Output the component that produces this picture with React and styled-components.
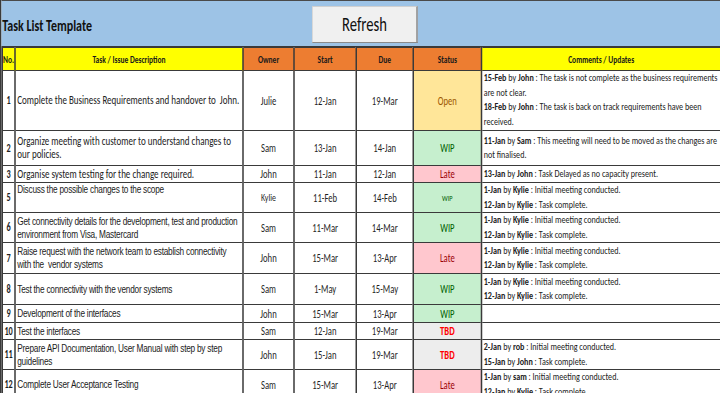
import React from 'react';
import styled, { createGlobalStyle } from 'styled-components';

// The sheet is laid out at 960px and squeezed to the 720px window,
// the way the spreadsheet capture is squeezed horizontally.
const GlobalStyle = createGlobalStyle`
  html, body {
    margin: 0;
    padding: 0;
    background: #ffffff;
  }
  body {
    font-family: Carlito, 'DejaVu Sans Condensed', 'Liberation Sans', sans-serif;
    color: #1f1f1f;
  }
`;

const Viewport = styled.div`
  width: 720px;
  height: 393px;
  overflow: hidden;
`;

const Page = styled.div`
  width: 960px;
  height: 393px;
  box-sizing: border-box;
  border-left: 2px solid #3a3a3a;
  transform: scaleX(0.75);
  transform-origin: 0 0;
`;

const TopBar = styled.div`
  display: grid;
  grid-template-columns: 414px 141px 1fr;
  align-items: center;
  height: 45px;
  background: #9dc3e6;
  border-top: 1px solid #4a4a4a;
  border-bottom: 1px solid #3a3a3a;
`;

const Title = styled.h1`
  margin: 0;
  padding: 3px 0 0 1px;
  font-size: 16px;
  font-weight: bold;
  color: #111;
`;

const RefreshButton = styled.button`
  height: 37px;
  margin-top: 1px;
  background: #f0f0f0;
  border: 1px solid #d0d0d0;
  border-right: 2px solid #8a8a8a;
  border-bottom-color: #8a8a8a;
  font-family: inherit;
  font-size: 19.5px;
  color: #111;
  padding: 0;
`;

const Sheet = styled.table`
  width: 958px;
  table-layout: fixed;
  border-collapse: collapse;
`;

const HeadCell = styled.th`
  height: 22px;
  padding: 0;
  background: ${p => (p.$tone === 'orange' ? '#ed7d31' : '#ffff00')};
  border: 1px solid #3a3a3a;
  border-left-width: 2px;
  border-right-width: 2px;
  font-size: 10px;
  font-weight: bold;
  color: #1a1a1a;
  text-align: ${p => (p.$left ? 'left' : 'center')};
  vertical-align: middle;
`;

const Row = styled.tr`
  height: ${p => p.$h}px;
`;

const Cell = styled.td`
  padding: 0 2px;
  border: 1px solid #3a3a3a;
  border-left-width: 2px;
  border-right-width: 2px;
  vertical-align: ${p => p.$valign || 'middle'};
  overflow: hidden;
`;

const NumCell = styled(Cell)`
  padding: 0;
  text-align: center;
  font-size: 11px;
  font-weight: bold;
`;

const DescCell = styled(Cell)`
  font-family: ${p => (p.$arial ? "'Liberation Sans', Arial, sans-serif" : 'inherit')};
  font-size: ${p => (p.$arial ? '11px' : '12px')};
  letter-spacing: ${p => (p.$arial ? '-0.3px' : '0')};
  line-height: 13px;
  color: #222;
`;

const MidCell = styled(Cell)`
  text-align: center;
  font-size: ${p => (p.$small ? '10.5px' : '11.5px')};
`;

const statusTones = {
  Open: { bg: '#ffe699', fg: '#9c5700', weight: 'normal' },
  WIP: { bg: '#c6efce', fg: '#006100', weight: 'normal' },
  Late: { bg: '#ffc7ce', fg: '#9c0006', weight: 'normal' },
  TBD: { bg: '#ededed', fg: '#ff0000', weight: 'bold' }
};

const StatusCell = styled(Cell)`
  text-align: center;
  background: ${p => statusTones[p.$status].bg};
  color: ${p => statusTones[p.$status].fg};
  font-weight: ${p => statusTones[p.$status].weight};
  font-size: ${p => (p.$small ? '8.5px' : '11.5px')};
`;

const CommentCell = styled(Cell)`
  font-size: 10.8px;
  line-height: 14.5px;
  color: #222;
`;

const Note = styled.div`
  white-space: normal;
`;

const rows = [
  {
    no: 1,
    desc: 'Complete the Business Requirements and handover to\u00a0 John.',
    owner: 'Julie',
    start: '12-Jan',
    due: '19-Mar',
    status: 'Open',
    h: 60,
    noteAlign: 'top',
    notes: [
      ['15-Feb', 'John', 'The task is not complete as the business requirements are not clear.'],
      ['18-Feb', 'John', 'The task is back on track requirements have been received.']
    ]
  },
  {
    no: 2,
    desc: 'Organize meeting with customer to understand changes to our policies.',
    owner: 'Sam',
    start: '13-Jan',
    due: '14-Jan',
    status: 'WIP',
    h: 35,
    notes: [['11-Jan', 'Sam', 'This meeting will need to be moved as the changes are not finalised.']]
  },
  {
    no: 3,
    desc: 'Organise system testing for the change required.',
    owner: 'John',
    start: '11-Jan',
    due: '12-Jan',
    status: 'Late',
    h: 17,
    notes: [['13-Jan', 'John', 'Task Delayed as no capacity present.']]
  },
  {
    no: 5,
    desc: 'Discuss the possible changes to the scope',
    owner: 'Kylie',
    start: '11-Feb',
    due: '14-Feb',
    status: 'WIP',
    small: true,
    arial: true,
    valign: 'top',
    h: 30,
    notes: [
      ['1-Jan', 'Kylie', 'Initial meeting conducted.'],
      ['12-Jan', 'Kylie', 'Task complete.']
    ]
  },
  {
    no: 6,
    desc: 'Get connectivity details for the development, test and production environment from Visa, Mastercard',
    owner: 'Sam',
    start: '11-Mar',
    due: '14-Mar',
    status: 'WIP',
    arial: true,
    h: 30,
    notes: [
      ['1-Jan', 'Kylie', 'Initial meeting conducted.'],
      ['12-Jan', 'Kylie', 'Task complete.']
    ]
  },
  {
    no: 7,
    desc: 'Raise request with the network team to establish connectivity with the\u00a0 vendor systems',
    owner: 'John',
    start: '15-Mar',
    due: '13-Apr',
    status: 'Late',
    arial: true,
    h: 31,
    notes: [
      ['1-Jan', 'Kylie', 'Initial meeting conducted.'],
      ['12-Jan', 'Kylie', 'Task complete.']
    ]
  },
  {
    no: 8,
    desc: 'Test the connectivity with the vendor systems',
    owner: 'Sam',
    start: '1-May',
    due: '15-May',
    status: 'WIP',
    arial: true,
    h: 31,
    notes: [
      ['1-Jan', 'Kylie', 'Initial meeting conducted.'],
      ['12-Jan', 'Kylie', 'Task complete.']
    ]
  },
  {
    no: 9,
    desc: 'Development of the interfaces',
    owner: 'John',
    start: '15-Mar',
    due: '13-Apr',
    status: 'WIP',
    arial: true,
    h: 18,
    notes: []
  },
  {
    no: 10,
    desc: 'Test the interfaces',
    owner: 'Sam',
    start: '12-Jan',
    due: '19-Mar',
    status: 'TBD',
    arial: true,
    h: 17,
    notes: []
  },
  {
    no: 11,
    desc: 'Prepare API Documentation, User Manual with step by step guidelines',
    owner: 'John',
    start: '15-Jan',
    due: '19-Mar',
    status: 'TBD',
    arial: true,
    h: 30,
    notes: [
      ['2-Jan', 'rob', 'Initial meeting conducted.'],
      ['15-Jan', 'John', 'Task complete.']
    ]
  },
  {
    no: 12,
    desc: 'Complete User Acceptance Testing',
    owner: 'Sam',
    start: '15-Mar',
    due: '13-Apr',
    status: 'Late',
    arial: true,
    h: 30,
    notes: [
      ['1-Jan', 'sam', 'Initial meeting conducted.'],
      ['12-Jan', 'Kylie', 'Task complete.']
    ]
  }
];

const App = () => {
  return (
    <>
      <GlobalStyle />
      <Viewport>
        <Page>
          <TopBar>
            <Title>Task List Template</Title>
            <RefreshButton>Refresh</RefreshButton>
          </TopBar>
          <Sheet>
            <colgroup>
              <col style={{ width: 17 }} />
              <col style={{ width: 304 }} />
              <col style={{ width: 68 }} />
              <col style={{ width: 83 }} />
              <col style={{ width: 76 }} />
              <col style={{ width: 91 }} />
              <col style={{ width: 319 }} />
            </colgroup>
            <thead>
              <tr>
                <HeadCell $left>No.</HeadCell>
                <HeadCell>Task / Issue Description</HeadCell>
                <HeadCell $tone='orange'>Owner</HeadCell>
                <HeadCell $tone='orange'>Start</HeadCell>
                <HeadCell $tone='orange'>Due</HeadCell>
                <HeadCell $tone='orange'>Status</HeadCell>
                <HeadCell>Comments / Updates</HeadCell>
              </tr>
            </thead>
            <tbody>
              {rows.map(r => (
                <Row key={r.no} $h={r.h}>
                  <NumCell>{r.no}</NumCell>
                  <DescCell $valign={r.valign} $arial={r.arial}>
                    {r.desc}
                  </DescCell>
                  <MidCell $small={r.small}>{r.owner}</MidCell>
                  <MidCell>{r.start}</MidCell>
                  <MidCell>{r.due}</MidCell>
                  <StatusCell $status={r.status} $small={r.small}>
                    {r.status}
                  </StatusCell>
                  <CommentCell $valign={r.noteAlign}>
                    {r.notes.map((n, i) => (
                      <Note key={i}>
                        <b>{n[0]}</b> by <b>{n[1]}</b> : {n[2]}
                      </Note>
                    ))}
                  </CommentCell>
                </Row>
              ))}
            </tbody>
          </Sheet>
        </Page>
      </Viewport>
    </>
  );
};

export default App;
